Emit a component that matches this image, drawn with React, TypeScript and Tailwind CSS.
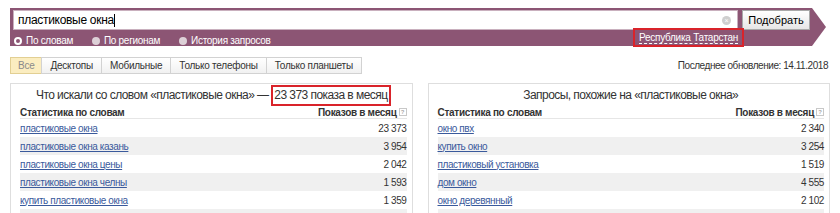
const leftRows = [
  { q: 'пластиковые окна', n: '23 373' },
  { q: 'пластиковые окна казань', n: '3 954' },
  { q: 'пластиковые окна цены', n: '2 042' },
  { q: 'пластиковые окна челны', n: '1 593' },
  { q: 'купить пластиковые окна', n: '1 359' },
  { q: '', n: '' },
];

const rightRows = [
  { q: 'окно пвх', n: '2 340' },
  { q: 'купить окно', n: '3 254' },
  { q: 'пластиковый установка', n: '1 519' },
  { q: 'дом окно', n: '4 555' },
  { q: 'окно деревянный', n: '2 102' },
  { q: '', n: '' },
];

const tabs = ['Все', 'Десктопы', 'Мобильные', 'Только телефоны', 'Только планшеты'];

function Radio({ label, checked }: { label: string; checked?: boolean }) {
  return (
    <label className="flex items-center gap-[4px] text-[10px] tracking-[-0.3px] text-white">
      {checked ? (
        <span className="w-[8px] h-[8px] rounded-full border-[2px] border-white" />
      ) : (
        <span className="w-[8px] h-[8px] rounded-full bg-[#ddd0d7]" />
      )}
      {label}
    </label>
  );
}

function Help() {
  return (
    <span className="ml-[2px] inline-flex w-[8px] h-[8px] items-center justify-center border border-[#c8c8c8] text-[6px] leading-none text-[#aaa]">
      ?
    </span>
  );
}

function Panel({
  title,
  rows,
}: {
  title: React.ReactNode;
  rows: { q: string; n: string }[];
}) {
  return (
    <div className="flex-1 border border-[#dedede] pl-[9px] pr-[5px] h-[140px] overflow-hidden">
      <div className="h-[22px] flex items-center justify-center text-[12px] tracking-[-0.55px] text-[#333] whitespace-nowrap">{title}</div>
      <div className="h-[12px] flex items-center justify-between text-[10px] tracking-[-0.3px] font-bold text-[#333] border-b border-[#e6e6e6] box-content">
        <span>Статистика по словам</span>
        <span className="flex items-center">
          Показов в месяц
          <Help />
        </span>
      </div>
      {rows.map((r, i) => (
        <div
          key={i}
          className={`h-[18px] flex items-center justify-between ${i % 2 === 1 ? 'bg-[#f0f0f0]' : ''}`}
        >
          <a className="text-[#3a5a9c] underline text-[10px] tracking-[-0.4px]">{r.q}</a>
          <span className="text-[#333] text-[10px] tracking-[-0.4px]">{r.n}</span>
        </div>
      ))}
    </div>
  );
}

export default function App() {
  return (
    <div className="w-[840px] h-[213px] bg-white overflow-hidden relative font-['Liberation_Sans',Arial,sans-serif]">
      <div className="pt-[8px] pl-[10px]">
        <div className="w-[816px] h-[38px] bg-[#8c5574] [clip-path:polygon(0_0,calc(100%-14px)_0,100%_50%,calc(100%-14px)_100%,0_100%)] pl-[3px] pt-[2px]">
          <div className="flex items-center gap-[4px]">
            <div className="w-[725px] h-[20px] bg-white border border-[#c9b0be] flex items-center pl-[4px] pr-[6px]">
              <span className="flex-1 text-[12px] tracking-[-0.3px] text-black">
                пластиковые окна<span className="inline-block w-px h-[13px] bg-black align-middle" />
              </span>
              <span className="w-[9px] h-[9px] rounded-full bg-[#cfcfcf] flex items-center justify-center text-[7px] leading-none text-white">×</span>
            </div>
            <button className="w-[68px] h-[20px] border border-[#a9a9a9] bg-gradient-to-b from-white to-[#e6e6e6] text-[11px] text-black flex items-center justify-center">
              Подобрать
            </button>
          </div>
          <div className="flex items-center gap-[19px] mt-[3px] pl-[1px]">
            <Radio label="По словам" checked />
            <Radio label="По регионам" />
            <Radio label="История запросов" />
          </div>
        </div>
      </div>

      <div className="absolute left-[633px] top-[28px] w-[111px] h-[19px] border-[2px] border-[#d9232a] flex items-center justify-center">
        <span className="text-[10px] tracking-[-0.25px] text-white border-b border-dashed border-white leading-[11px] whitespace-nowrap">
          Республика Татарстан
        </span>
      </div>

      <div className="flex items-center justify-between mt-[11px] pl-[10px] pr-[12px]">
        <div className="flex h-[17px]">
          {tabs.map((t, i) => (
            <div
              key={t}
              className={`h-full flex items-center border text-[10px] tracking-[-0.25px] ${i > 0 ? '-ml-px px-[8px]' : ''} ${
                i === 0
                  ? 'bg-[#fbedc0] border-[#e2cf93] text-[#8a8a8a] px-[7px]'
                  : 'bg-gradient-to-b from-white to-[#f1f1f1] border-[#d2d2d2] text-[#333]'
              }`}
            >
              {t}
            </div>
          ))}
        </div>
        <div className="text-[10px] tracking-[-0.45px] text-[#333]">Последнее обновление: 14.11.2018</div>
      </div>

      <div className="flex gap-[15px] mt-[9px] pl-[10px] pr-[10px]">
        <Panel
          rows={leftRows}
          title={
            <>
              Что искали со словом «пластиковые окна» —&nbsp;
              <span className="border-[2px] border-[#d9232a] px-[1px] leading-[17px]">23 373 показа в месяц</span>
            </>
          }
        />
        <Panel rows={rightRows} title="Запросы, похожие на «пластиковые окна»" />
      </div>
    </div>
  );
}
